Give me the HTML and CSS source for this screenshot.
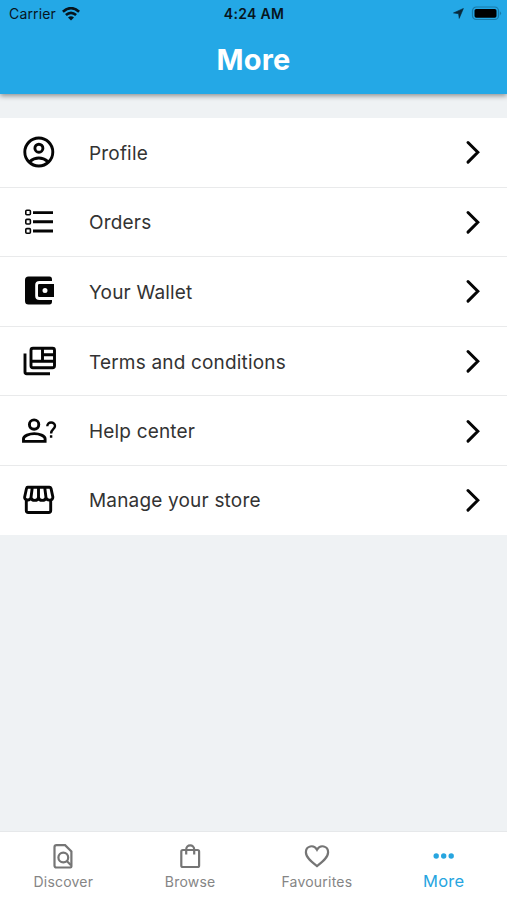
FILE: index.html
```
<!DOCTYPE html>
<html lang="en">
<head>
<meta charset="utf-8">
<title>More</title>
<link rel="stylesheet" href="styles.css">
</head>
<body>
<svg width="0" height="0" class="defs" aria-hidden="true">
  <symbol id="chevron" viewBox="0 0 20 28"><path d="M5 4.5 14.800 14.300 5 24.100"/></symbol>
</svg>
<header class="header">
  <div class="status">
    <div class="carrier"><span>Carrier</span>
      <svg width="18" height="14" viewBox="0 0 18 14"><g fill="none" stroke="#07151d" stroke-width="2.700"><path d="M.9 4.700Q9-2.300 17.100 4.700"/><path d="M3.900 8Q9 3.600 14.100 8"/></g><path fill="#07151d" d="M6 10.400Q9 7.900 12 10.400L9 13.600Z"/></svg>
    </div>
    <div class="time">4:24 AM</div>
    <div class="power">
      <svg width="11" height="11" viewBox="0 0 11 11"><path fill="#092a3d" stroke="#092a3d" stroke-width=".6" d="M10.400.5 6.200 10.400 5.600 5.700.5 4.900Z"/></svg>
      <svg width="31" height="15" viewBox="0 0 31 15"><rect x="1.500" y="1" width="26" height="12.500" rx="3.800" fill="none" stroke="#187aa8" stroke-width="1.200"/><rect x="3.500" y="3" width="22" height="8.700" rx="1.800"/><path fill="#187aa8" d="M28.900 5.200q2.300 2 0 4.200z"/></svg>
    </div>
  </div>
  <h1>More</h1>
</header>
<main class="list">
  <a class="row">
    <svg class="icon" viewBox="0 0 40 40"><circle cx="19.800" cy="20" r="14"/><circle cx="19.900" cy="16.200" r="4"/><path d="M10.300 29.800Q19.800 22.200 29.300 29.800"/></svg>
    <span class="label">Profile</span><svg class="chevron"><use href="#chevron"/></svg>
  </a>
  <a class="row">
    <svg class="icon" viewBox="0 0 40 40"><path d="M14 10.600h20M14 19.800h20M14 29h20"/><g stroke-width="1.600"><rect x="6.800" y="8.200" width="4.600" height="4.600" rx="1"/><rect x="6.800" y="17.400" width="4.600" height="4.600" rx="1"/><rect x="6.800" y="26.600" width="4.600" height="4.600" rx="1"/></g></svg>
    <span class="label">Orders</span><svg class="chevron"><use href="#chevron"/></svg>
  </a>
  <a class="row">
    <svg class="icon solid" viewBox="0 0 40 40"><path d="M9.500 5.500H30.500q2.500 0 2.500 3V10H20.500q-4.300 0-4.300 4V25q0 4 4.300 4H33v1.500q0 3-2.500 3H9.500q-3.500 0-3.500-3.500V9Q6 5.500 9.500 5.500Z"/><path fill-rule="evenodd" d="M20.300 13H35V26H20.300q-1.300 0-1.300-1.300V14.300q0-1.300 1.300-1.300ZM26 17a2.500 2.500 0 1 0 0 5a2.500 2.500 0 1 0 0-5Z"/></svg>
    <span class="label">Your Wallet</span><svg class="chevron"><use href="#chevron"/></svg>
  </a>
  <a class="row">
    <svg class="icon" viewBox="0 0 40 40"><rect x="12" y="7.300" width="23.500" height="19.500" rx="2"/><path d="M12 20.200h23.500M23.500 7.300v12.900M23.500 13.700h12M6 12.500v18.500q0 1.700 1.700 1.700H31"/></svg>
    <span class="label">Terms and conditions</span><svg class="chevron"><use href="#chevron"/></svg>
  </a>
  <a class="row">
    <svg class="icon" viewBox="0 0 40 40"><circle cx="15.100" cy="13.600" r="4.700"/><path d="M4.500 30.400v-2.600c0-3 5.800-5.200 10.800-5.200s10.800 2.200 10.800 5.200v2.600z"/><path stroke-width="2.400" d="M28.300 15.300c0-5.300 7.700-4.700 7.700-.2 0 3.200-3.900 3.200-3.900 7.300M32.100 24.300v2.400"/></svg>
    <span class="label">Help center</span><svg class="chevron"><use href="#chevron"/></svg>
  </a>
  <a class="row">
    <svg class="icon" viewBox="0 0 40 40"><path d="M7.300 19v11.500q0 2 2 2h20.400q2 0 2-2V19M8.600 7.300h21.800q1.200 0 1.600 1.200l1.800 8.300c.6 4-5.700 4.500-6.800.8-.9 3.700-6.600 3.700-7.500 0-.9 3.700-6.600 3.700-7.500 0-1.200 3.700-7 3-6.300-.8l1.800-8.300q.3-1.200 1.100-1.200ZM13.300 7.300 12 17.600M19.500 7.300v10.300M25.700 7.300 27 17.600"/></svg>
    <span class="label">Manage your store</span><svg class="chevron"><use href="#chevron"/></svg>
  </a>
</main>
<nav class="tabs">
  <a class="tab"><svg viewBox="0 0 28 28"><path d="M7.500 3.200h8.600l6.300 6.300v15q0 1-1 1H7.500q-2 0-2-2V5.200q0-2 2-2Z"/><circle cx="14.300" cy="15.500" r="4.900"/><path d="m17.800 19 4.200 4.200"/></svg><span>Discover</span></a>
  <a class="tab"><svg viewBox="0 0 28 28"><rect x="5.300" y="8" width="17.800" height="17" rx="1.600"/><path d="M10.200 12.500V7.400a4 4 0 0 1 8 0v5.100"/></svg><span>Browse</span></a>
  <a class="tab"><svg viewBox="0 0 28 28"><path d="M14 24.200C8.700 20 2.900 15.500 2.900 10.200c0-6.200 7.800-8.300 11.100-2.400 3.300-5.900 11.100-3.800 11.100 2.400 0 5.300-5.800 9.800-11.100 14Z"/></svg><span>Favourites</span></a>
  <a class="tab active"><svg viewBox="0 0 28 28"><circle cx="6.200" cy="14" r="2.700"/><circle cx="13.700" cy="14" r="2.700"/><circle cx="21.200" cy="14" r="2.700"/></svg><span>More</span></a>
</nav>
</body>
</html>
```
FILE: styles.css
```
* { box-sizing: border-box; }
body {
  margin: 0;
  height: 900px;
  display: flex;
  flex-direction: column;
  overflow: hidden;
  background: #eff2f4;
  color: #333;
  font-family: Inter, "Liberation Sans", sans-serif;
}
svg { display: block; flex: none; }
.defs { display: none; }
.header {
  height: 94px;
  flex: none;
  background: #24a8e6;
  box-shadow: 0 2px 5px rgba(0, 0, 0, .4);
}
.status {
  height: 27px;
  padding: 0 5px 0 9px;
  display: grid;
  grid-template-columns: 1fr auto 1fr;
  align-items: center;
  color: #07151d;
  font-size: 14px;
}
.carrier { display: flex; align-items: center; gap: 6px; letter-spacing: .15px; }
.time { margin-right: 3px; font-weight: 600; letter-spacing: .3px; }
.power { display: flex; align-items: center; justify-content: flex-end; gap: 7px; }
h1 {
  margin: 0;
  line-height: 66px;
  text-align: center;
  color: #fff;
  font-size: 29px;
  font-weight: 700;
  letter-spacing: .2px;
}
.list { margin-top: 24px; flex: none; }
.row {
  height: 69.6px;
  padding: 0 24px 0 19px;
  display: flex;
  align-items: center;
  background: #fff;
  border-bottom: 1px solid #e9eaeb;
}
.row:last-child { height: 69px; border-bottom-color: #fff; }
.icon { width: 40px; height: 40px; fill: none; stroke: #050505; stroke-width: 2.9; }
.icon.solid { fill: #050505; stroke: none; }
.label {
  flex: 1;
  margin-left: 30px;
  padding-top: 2px;
  font-size: 19px;
  letter-spacing: .18px;
}
.chevron { width: 20px; height: 28px; fill: none; stroke: #050505; stroke-width: 3; stroke-linecap: round; }
.tabs {
  height: 69px;
  margin-top: auto;
  flex: none;
  display: grid;
  grid-template-columns: repeat(4, 1fr);
  background: #fff;
  border-top: 1px solid #e6e8ea;
}
.tab {
  padding-top: 10px;
  display: flex;
  flex-direction: column;
  align-items: center;
  color: #858585;
  font-size: 14px;
  letter-spacing: .2px;
  line-height: 24px;
}
.tab svg { width: 28px; height: 28px; fill: none; stroke: #757575; stroke-width: 2.2; }
.tab.active { color: #27a5df; font-size: 16.5px; line-height: 22px; }
.tab.active svg { fill: #27a5df; stroke: none; }
```
